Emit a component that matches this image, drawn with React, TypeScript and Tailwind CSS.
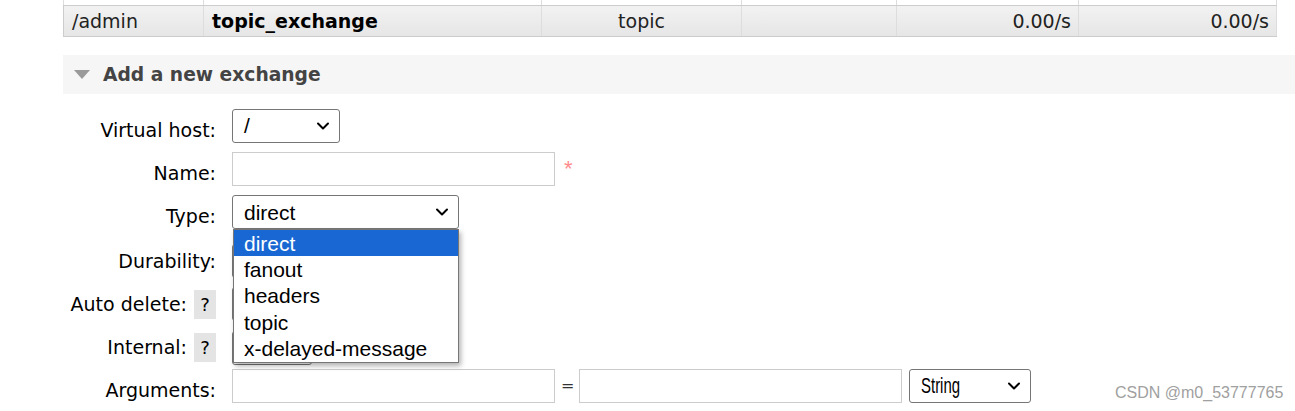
import { ChevronDown } from "lucide-react";

const labelFont = { fontFamily: '"DejaVu Sans", Verdana, sans-serif' };

function FakeSelect({
  value,
  width,
  narrow = false,
}: {
  value: string;
  width: string;
  narrow?: boolean;
}) {
  return (
    <div
      className={`${width} h-[34px] flex items-center justify-between border border-[#767676] rounded-[3px] bg-white pl-[11px] pr-[6px] text-black`}
      style={{ fontFamily: '"Liberation Sans", Arial, sans-serif' }}
    >
      {narrow ? (
        <span className="inline-block text-[22px] leading-none origin-left scale-x-[0.68]">{value}</span>
      ) : (
        <span className="text-[21px] leading-none">{value}</span>
      )}
      <ChevronDown className="h-[20px] w-[20px]" strokeWidth={2.4} />
    </div>
  );
}

function TextInput({ width }: { width: string }) {
  return <div className={`${width} h-[34px] border border-[#cccccc] bg-white`} />;
}

function HelpBox() {
  return (
    <span className="inline-flex items-center justify-center w-[22px] h-[29px] bg-[#e4e4e4] text-[18px] text-black">
      ?
    </span>
  );
}

function FormRow({
  label,
  help = false,
  drop = true,
  height,
  children,
}: {
  label: string;
  help?: boolean;
  drop?: boolean;
  height: string;
  children?: React.ReactNode;
}) {
  return (
    <div className={`flex items-center ${height}`}>
      <div
        className={`w-[153px] flex items-center justify-end gap-[7px] text-[19px] text-black ${
          drop && !help ? "pt-[9px]" : ""
        }`}
      >
        <span>{label}</span>
        {help && <HelpBox />}
      </div>
      <div className="ml-[16px] flex items-center">{children}</div>
    </div>
  );
}

const options = ["direct", "fanout", "headers", "topic", "x-delayed-message"];

export default function App() {
  return (
    <div className="relative w-[1295px] h-[411px] overflow-hidden bg-white" style={labelFont}>
      {/* exchange table tail */}
      <div className="ml-[63px] w-[1214px] text-[19px] text-[#222]">
        <div className="grid grid-cols-[140px_338px_200px_155px_182px_199px] h-[6px] border-b border-[#cccccc]">
          {[0, 1, 2, 3, 4, 5].map((i) => (
            <div key={i} className="border-l border-[#dddddd] last:border-r" />
          ))}
        </div>
        <div className="grid grid-cols-[140px_338px_200px_155px_182px_199px] h-[31px] border-b border-[#cccccc] bg-gradient-to-b from-[#f2f2f2] to-[#e6e6e6]">
          <div className="border-l border-[#cccccc] pl-[8px] flex items-center">/admin</div>
          <div className="border-l border-[#dddddd] pl-[8px] flex items-center font-bold text-black">
            topic_exchange
          </div>
          <div className="border-l border-[#dddddd] flex items-center justify-center">topic</div>
          <div className="border-l border-[#dddddd]" />
          <div className="border-l border-[#dddddd] pr-[7px] flex items-center justify-end">0.00/s</div>
          <div className="border-l border-r border-[#dddddd] pr-[7px] flex items-center justify-end">
            0.00/s
          </div>
        </div>
      </div>

      {/* section header */}
      <div className="ml-[63px] mt-[18px] h-[39px] bg-[#f6f6f6] flex items-center">
        <svg width="16" height="9" viewBox="0 0 16 9" className="ml-[11px]">
          <polygon points="0,0 16,0 8,9" fill="#9a9a9a" />
        </svg>
        <span className="ml-[13px] pt-[2px] text-[18.7px] font-bold text-[#444]">Add a new exchange</span>
      </div>

      {/* form */}
      <div className="ml-[63px] mt-[10px]">
        <FormRow label="Virtual host:" height="h-[43px]">
          <FakeSelect value="/" width="w-[108px]" />
        </FormRow>
        <FormRow label="Name:" height="h-[43px]">
          <TextInput width="w-[323px]" />
          <span
            className="ml-[9px] text-[22px] text-[#ff8a8a]"
            style={{ fontFamily: '"Liberation Sans", Arial, sans-serif' }}
          >
            *
          </span>
        </FormRow>
        <FormRow label="Type:" height="h-[44px]">
          <FakeSelect value="direct" width="w-[227px]" />
        </FormRow>
        <FormRow label="Durability:" drop={false} height="h-[54px]">
          <FakeSelect value="Durable" width="w-[130px]" />
        </FormRow>
        <FormRow label="Auto delete:" help height="h-[32px]">
          <FakeSelect value="No" width="w-[80px]" />
        </FormRow>
        <FormRow label="Internal:" help height="h-[55px]">
          <FakeSelect value="No" width="w-[80px]" />
        </FormRow>
        <FormRow label="Arguments:" height="h-[21px]">
          <TextInput width="w-[323px]" />
          <span className="ml-[6px] mr-[5px] text-[16px] text-[#333]">=</span>
          <TextInput width="w-[323px]" />
          <div className="ml-[7px]">
            <FakeSelect value="String" width="w-[122px]" narrow />
          </div>
        </FormRow>
        <div className="ml-[454px] mt-[15px] w-[22px] h-[22px] bg-[#e4e4e4]" />
      </div>

      {/* open type dropdown */}
      <div
        className="absolute left-[233px] top-[229px] w-[226px] border border-[#767676] bg-white shadow-[2px_3px_5px_rgba(0,0,0,0.3)]"
        style={{ fontFamily: '"Liberation Sans", Arial, sans-serif' }}
      >
        {options.map((o, i) => (
          <div
            key={o}
            className={`h-[26.4px] flex items-center pl-[10px] text-[21px] leading-none ${
              i === 0 ? "bg-[#1967d2] text-white" : "text-black"
            }`}
          >
            {o}
          </div>
        ))}
      </div>

      {/* watermark */}
      <div
        className="absolute left-[1115px] top-[381px] text-[16px] text-[#a0a0a0]"
        style={{ fontFamily: '"Liberation Sans", Arial, sans-serif' }}
      >
        CSDN @m0_53777765
      </div>
    </div>
  );
}
